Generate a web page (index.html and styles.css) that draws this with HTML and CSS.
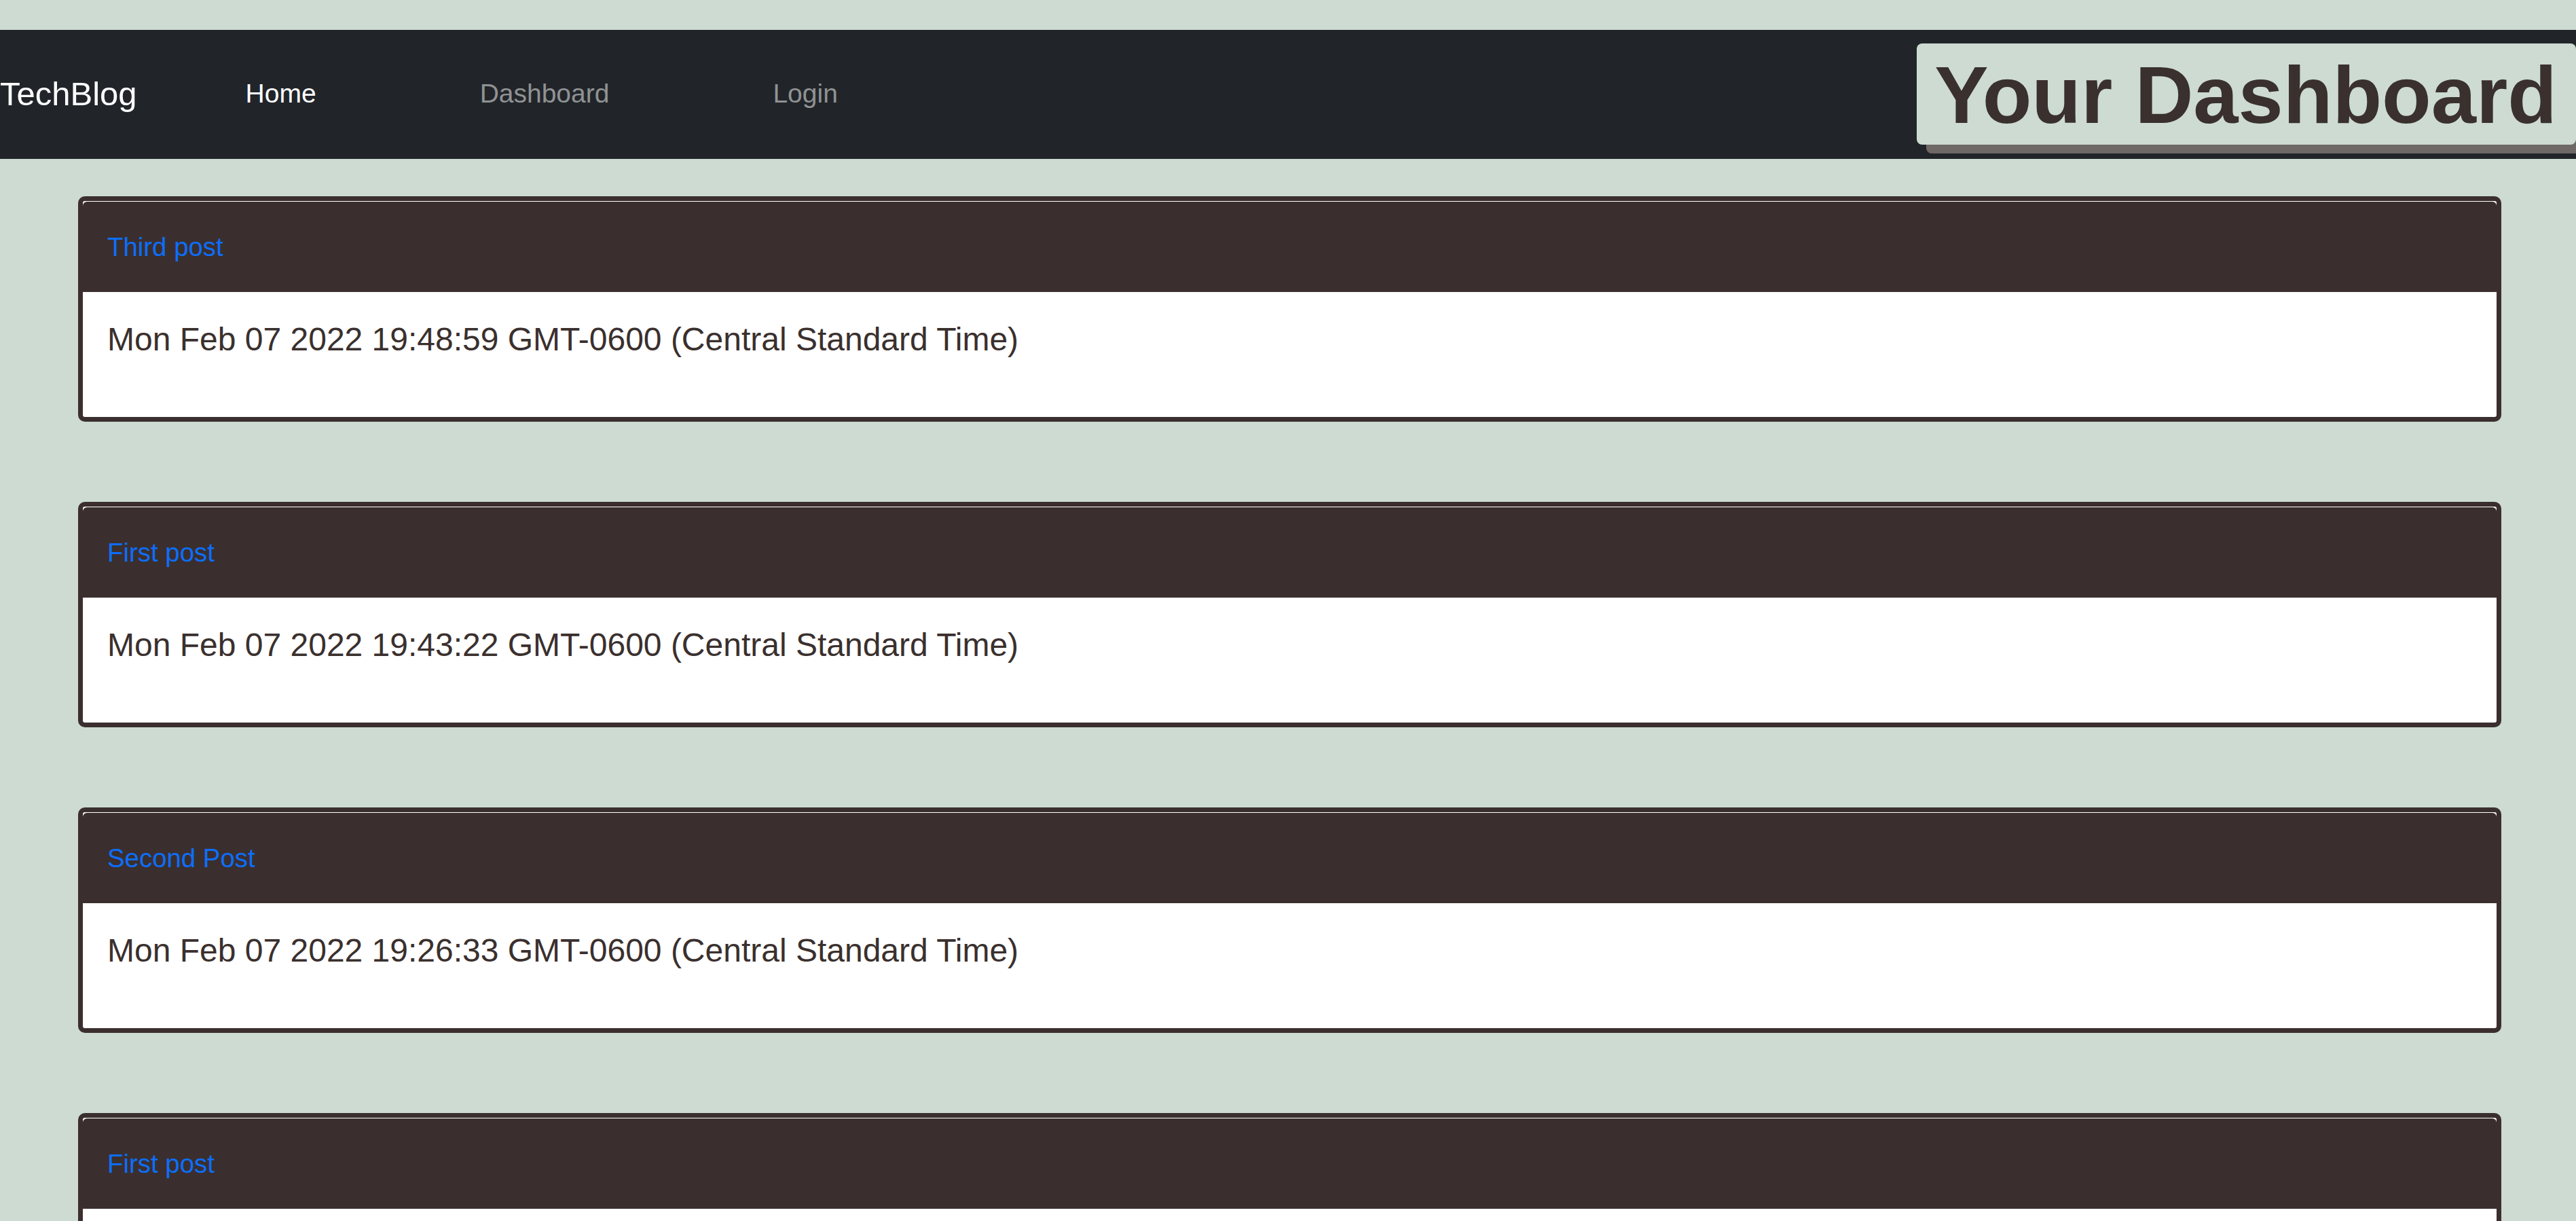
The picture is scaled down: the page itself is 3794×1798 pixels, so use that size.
FILE: index.html
```html
<!DOCTYPE html>
<html lang="en">
<head>
<meta charset="utf-8">
<title>TechBlog - Dashboard</title>
<link rel="stylesheet" href="styles.css">
</head>
<body>
<nav class="navbar">
  <a class="brand" href="#">TechBlog</a>
  <div class="nav-links">
    <a class="nav-link active" href="#">Home</a>
    <a class="nav-link" href="#">Dashboard</a>
    <a class="nav-link" href="#">Login</a>
  </div>
  <h1 class="page-title">Your Dashboard</h1>
</nav>
<main class="posts">
  <article class="card">
    <div class="card-header"><a href="#">Third post</a></div>
    <div class="card-body"><p>Mon Feb 07 2022 19:48:59 GMT-0600 (Central Standard Time)</p></div>
  </article>
  <article class="card">
    <div class="card-header"><a href="#">First post</a></div>
    <div class="card-body"><p>Mon Feb 07 2022 19:43:22 GMT-0600 (Central Standard Time)</p></div>
  </article>
  <article class="card">
    <div class="card-header"><a href="#">Second Post</a></div>
    <div class="card-body"><p>Mon Feb 07 2022 19:26:33 GMT-0600 (Central Standard Time)</p></div>
  </article>
  <article class="card">
    <div class="card-header"><a href="#">First post</a></div>
    <div class="card-body"><p>Mon Feb 07 2022 19:20:15 GMT-0600 (Central Standard Time)</p></div>
  </article>
</main>
</body>
</html>
```
FILE: styles.css
```css
html {
  overflow: hidden;
}
body {
  margin: 0;
  padding-top: 44px;
  background: #cddbd2;
  font-family: "Liberation Sans", Arial, sans-serif;
}
.navbar {
  display: flex;
  align-items: center;
  background: #212529;
  padding: 20px 0 21px 0;
}
.brand {
  color: #ffffff;
  font-size: 49px;
  text-decoration: none;
  margin-right: 160px;
}
.nav-links {
  display: flex;
  gap: 241px;
}
.nav-link {
  color: #909294;
  font-size: 39px;
  text-decoration: none;
}
.nav-link.active {
  color: #ffffff;
}
.page-title {
  margin: 0 0 0 auto;
  background: #cddbd2;
  color: #3a302e;
  font-size: 119px;
  font-weight: bold;
  line-height: 135.6px;
  padding: 8px 28px 5px 26px;
  border-radius: 8px;
  box-shadow: 14px 13px 0 #6e6866;
  white-space: nowrap;
}
.posts {
  display: flex;
  flex-direction: column;
  gap: 118px;
  margin: 55px 110px 0 115px;
}
.card {
  border: 7px solid #3a2f2e;
  border-radius: 10px;
  background: #ffffff;
  padding-top: 1px;
}
.card-header {
  background: #3a2f2e;
  border-radius: 6px 6px 0 0;
  padding: 38px 36px;
  line-height: 57px;
  font-size: 38.4px;
}
.card-header a {
  color: #0d6efd;
  text-decoration: none;
}
.card-body {
  padding: 38px 36px 82px 36px;
}
.card-body p {
  margin: 0;
  font-size: 48px;
  line-height: 64px;
  color: #3a302e;
}
```
